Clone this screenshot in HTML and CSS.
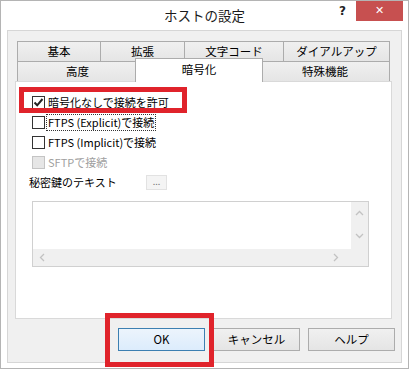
FILE: index.html
```html
<!DOCTYPE html>
<html lang="ja">
<head>
  <meta charset="UTF-8">
  <title>ホストの設定</title>
  <link rel="stylesheet" href="styles.css">
</head>
<body>

  <div class="screen">
    <div class="window">

      <div class="titlebar">
        <span></span>
        <div class="title">ホストの設定</div>
        <div class="caption">
          <span class="help">?</span>
          <span class="close">✕</span>
        </div>
      </div>

      <div class="client">
        <div class="tabs">
          <div class="tab-row">
            <div class="tab t-kihon">基本</div>
            <div class="tab t-kakucho">拡張</div>
            <div class="tab t-moji">文字コード</div>
            <div class="tab t-dial">ダイアルアップ</div>
          </div>
          <div class="tab-row">
            <div class="tab t-kodo">高度</div>
            <div class="tab t-angou active">暗号化</div>
            <div class="tab t-tokushu">特殊機能</div>
          </div>
        </div>

        <div class="panel">
          <div class="row">
            <span class="box checked">
              <svg width="11" height="11" viewBox="0 0 11 11"><path d="M1.5 5.5 L4.2 8.3 L9.5 2" fill="none" stroke="#222" stroke-width="2"/></svg>
            </span>
            <span class="label">暗号化なしで接続を許可</span>
          </div>
          <div class="row">
            <span class="box"></span>
            <span class="label focus">FTPS (Explicit)で接続</span>
          </div>
          <div class="row">
            <span class="box"></span>
            <span class="label">FTPS (Implicit)で接続</span>
          </div>
          <div class="row disabled">
            <span class="box"></span>
            <span class="label">SFTPで接続</span>
          </div>
          <div class="row keyrow">
            <span class="keylabel">秘密鍵のテキスト</span>
            <span class="dots-btn">...</span>
          </div>

          <div class="textbox">
            <div class="text-area"></div>
            <div class="vscroll">
              <svg width="9" height="6" viewBox="0 0 9 6"><path d="M1 5 L4.5 1.5 L8 5" fill="none" stroke="#c2c2c2" stroke-width="1.3"/></svg>
              <svg width="9" height="6" viewBox="0 0 9 6"><path d="M1 1 L4.5 4.5 L8 1" fill="none" stroke="#c2c2c2" stroke-width="1.3"/></svg>
            </div>
            <div class="hscroll">
              <svg width="6" height="9" viewBox="0 0 6 9"><path d="M5 1 L1.5 4.5 L5 8" fill="none" stroke="#c2c2c2" stroke-width="1.3"/></svg>
              <svg width="6" height="9" viewBox="0 0 6 9"><path d="M1 1 L4.5 4.5 L1 8" fill="none" stroke="#c2c2c2" stroke-width="1.3"/></svg>
            </div>
            <div class="corner"></div>
          </div>
        </div>

        <div class="buttons">
          <span class="btn default">OK</span>
          <span class="btn">キャンセル</span>
          <span class="btn">ヘルプ</span>
        </div>
      </div>

    </div>

    <!-- 赤枠の注釈 -->
    <div class="mark mark-check"></div>
    <div class="mark mark-ok"></div>
  </div>

</body>
</html>
```

FILE: styles.css
```css
* {
  box-sizing: border-box;
  margin: 0;
  padding: 0;
}

body {
  background: #fff;
  font-family: "Noto Sans CJK JP", "Noto Sans", sans-serif;
  font-size: 11px;
  color: #000;
}

.screen {
  position: relative;
  width: 409px;
  height: 369px;
}

.window {
  width: 409px;
  height: 369px;
  border: 1px solid #b4b4b4;
  background: #fff;
  display: flex;
  flex-direction: column;
}

/* タイトルバー */
.titlebar {
  height: 29px;
  display: grid;
  grid-template-columns: 1fr auto 1fr;
  align-items: start;
}

.title {
  font-size: 13.5px;
  line-height: 29px;
  color: #1a1a1a;
}

.caption {
  display: flex;
  justify-content: flex-end;
  align-items: flex-start;
  margin-right: 5px;
}

.help {
  font-family: "DejaVu Sans", sans-serif;
  font-weight: bold;
  font-size: 12px;
  line-height: 20px;
  color: #222;
  margin-right: 10px;
}

.close {
  width: 47px;
  height: 20px;
  background: #c75050;
  color: #fff;
  font-family: "DejaVu Sans", sans-serif;
  font-size: 11px;
  font-weight: bold;
  line-height: 20px;
  text-align: center;
}

/* クライアント領域 */
.client {
  flex: 1;
  margin: 0 6px 5px;
  border: 1px solid #d6d6d6;
  background: #f0f0f0;
  padding: 10px 9px 0 7px;
  display: flex;
  flex-direction: column;
}

.tabs {
  margin-left: 2px;
  width: 373px;
}

.tab-row {
  display: flex;
  height: 20px;
  align-items: flex-start;
}

.tab {
  height: 21px;
  border: 1px solid #acacac;
  background: linear-gradient(#f0f0f0, #e5e5e5);
  text-align: center;
  line-height: 18px;
  font-size: 11.5px;
  margin-left: -1px;
}

.tab-row .tab:first-child {
  margin-left: 0;
}

.t-kihon { width: 84px; }
.t-kakucho { width: 85px; }
.t-moji { width: 100px; }
.t-dial { width: 107px; }
.t-kodo { width: 121px; }

.t-angou {
  width: 128px;
  margin-left: -3px;
}

.t-tokushu {
  width: 130px;
  margin-left: -3px;
}

.tab.active {
  position: relative;
  z-index: 2;
  height: 24px;
  margin-top: -3px;
  background: #fff;
  border-bottom: none;
  line-height: 20px;
}

.panel {
  width: 377px;
  height: 238px;
  border: 1px solid #d9d9d9;
  background: #fff;
  padding: 10px 0 0 16px;
}

.row {
  height: 20px;
  display: flex;
  align-items: center;
}

.box {
  width: 13px;
  height: 13px;
  border: 1px solid #333;
  background: #fff;
  margin-right: 2px;
  display: flex;
  align-items: center;
  justify-content: center;
}

.label {
  line-height: 15px;
  padding: 0 1px;
}

.label.focus {
  outline: 1px dotted #333;
  outline-offset: 0;
}

.disabled .box {
  border-color: #c4c4c4;
  background: #e6e6e6;
}

.disabled .label {
  color: #a0a0a0;
}

.keyrow {
  margin-left: -3px;
}

.keylabel {
  width: 117px;
}

.dots-btn {
  width: 21px;
  height: 15px;
  border: 1px solid #e2e2e2;
  background: #f4f4f4;
  color: #777;
  font-size: 9px;
  line-height: 11px;
  text-align: center;
}

/* テキストボックス */
.textbox {
  margin-top: 9px;
  width: 337px;
  height: 66px;
  border: 1px solid #d0d0d0;
  display: grid;
  grid-template-columns: 1fr 17px;
  grid-template-rows: 1fr 17px;
}

.vscroll {
  background: #f0f0f0;
  display: flex;
  flex-direction: column;
  justify-content: space-between;
  align-items: center;
  padding: 8px 0 10px;
}

.hscroll {
  background: #f0f0f0;
  display: flex;
  justify-content: space-between;
  align-items: center;
  padding: 0 12px 0 6px;
}

.corner {
  background: #f0f0f0;
}

/* ボタン */
.buttons {
  display: flex;
  justify-content: flex-end;
  gap: 8px;
  margin-top: 9px;
  margin-right: -3px;
}

.btn {
  width: 87px;
  height: 23px;
  border: 1px solid #acacac;
  background: linear-gradient(#f0f0f0, #e5e5e5);
  text-align: center;
  line-height: 21px;
  font-size: 11.5px;
}

.btn.default {
  border-color: #3c7fb1;
  background: linear-gradient(#ecf4fc, #dcecfc);
}

/* 注釈 */
.mark {
  position: absolute;
  border: 5px solid #e0232b;
}

.mark-check {
  left: 19px;
  top: 87px;
  width: 168px;
  height: 26px;
}

.mark-ok {
  left: 105px;
  top: 313px;
  width: 109px;
  height: 54px;
}
```
